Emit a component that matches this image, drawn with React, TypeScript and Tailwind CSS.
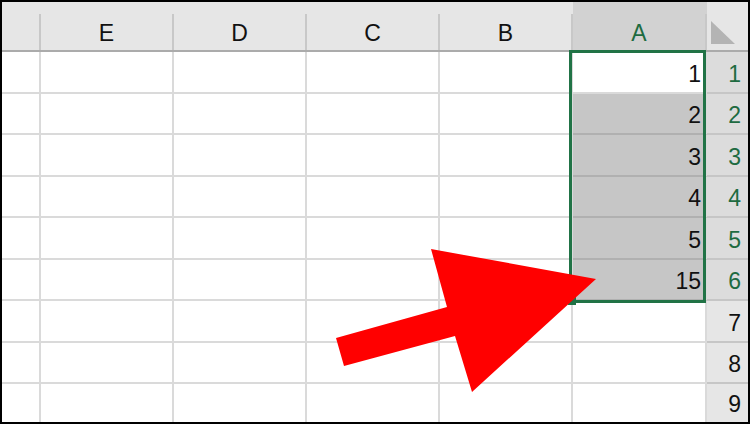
const colWidths = ['w-[39px]', 'w-[133px]', 'w-[133px]', 'w-[133px]', 'w-[133px]', 'w-[134px]'];
const headers = ['', 'E', 'D', 'C', 'B', 'A'];
const rowHeights = ['h-[42px]', 'h-[41px]', 'h-[42px]', 'h-[41px]', 'h-[42px]', 'h-[41px]', 'h-[42px]', 'h-[41px]', 'h-[38px]'];
const values: (number | null)[] = [1, 2, 3, 4, 5, 15, null, null, null];

const font = { fontFamily: '"Liberation Sans", Arial, sans-serif' };

export default function App() {
  return (
    <div className="w-[750px] h-[424px] bg-black p-[2px]">
      <div className="relative w-[746px] h-[420px] bg-white flex flex-col overflow-hidden" style={font}>
        {/* column headers */}
        <div className="flex h-[50px] border-b-2 border-[#ababab] bg-[#e6e6e6]">
          {headers.map((h, i) => (
            <div
              key={i}
              className={`${colWidths[i]} flex ${i === 5 ? 'bg-[#d2d2d2]' : ''}`}
            >
              <div
                className={`flex-1 flex items-end justify-center pb-[5px] text-[23px] leading-none ${
                  i === 5 ? 'text-[#1e6b41]' : 'text-[#111]'
                }`}
              >
                {h}
              </div>
              <div className="w-[2px] mt-[12px] bg-[#c8c8c8]" />
            </div>
          ))}
          {/* corner */}
          <div className="w-[41px] flex items-end pl-[4px] pb-[5px]">
            <svg width="24" height="24" viewBox="0 0 24 24">
              <polygon points="0,0 0,23 24,23" fill="#b4b4b4" />
            </svg>
          </div>
        </div>

        {/* rows */}
        {rowHeights.map((rh, r) => {
          const selected = r < 6;
          return (
            <div key={r} className={`flex ${rh}`}>
              {colWidths.map((cw, c) => {
                const isA = c === 5;
                const grey = isA && r >= 1 && r <= 5;
                return (
                  <div
                    key={c}
                    className={`${cw} border-r-2 ${r < 8 ? 'border-b-2' : ''} ${
                      grey ? 'bg-[#c6c6c6] border-b-[#b0b0b0]' : 'border-b-[#dadada]'
                    } border-r-[#dadada] flex items-end justify-end pr-[4px] pb-[6px] text-[23px] leading-none text-[#111]`}
                  >
                    {isA && values[r] !== null ? values[r] : ''}
                  </div>
                );
              })}
              <div
                className={`w-[41px] ${r < 8 ? 'border-b-2' : ''} border-[#c6c6c6] flex items-end justify-end pr-[7px] pb-[6px] text-[23px] leading-none ${
                  selected ? 'bg-[#dcdcdc] text-[#1e6b41]' : 'bg-[#e6e6e6] text-[#111]'
                }`}
              >
                {r + 1}
              </div>
            </div>
          );
        })}

        {/* selection outline A1:A6 */}
        <div className="absolute left-[567px] top-[48px] w-[137px] h-[253px] border-[3px] border-[#217346]" />
        <div className="absolute left-[566px] top-[295px] w-[8px] h-[8px] bg-[#217346]" />

        {/* red arrow */}
        <svg className="absolute left-0 top-0" width="746" height="420" viewBox="2 2 746 420">
          <polygon
            points="336,338 447,307 431,249 596,279 472,392 455,336 344,366"
            fill="#ff0000"
          />
        </svg>
      </div>
    </div>
  );
}
